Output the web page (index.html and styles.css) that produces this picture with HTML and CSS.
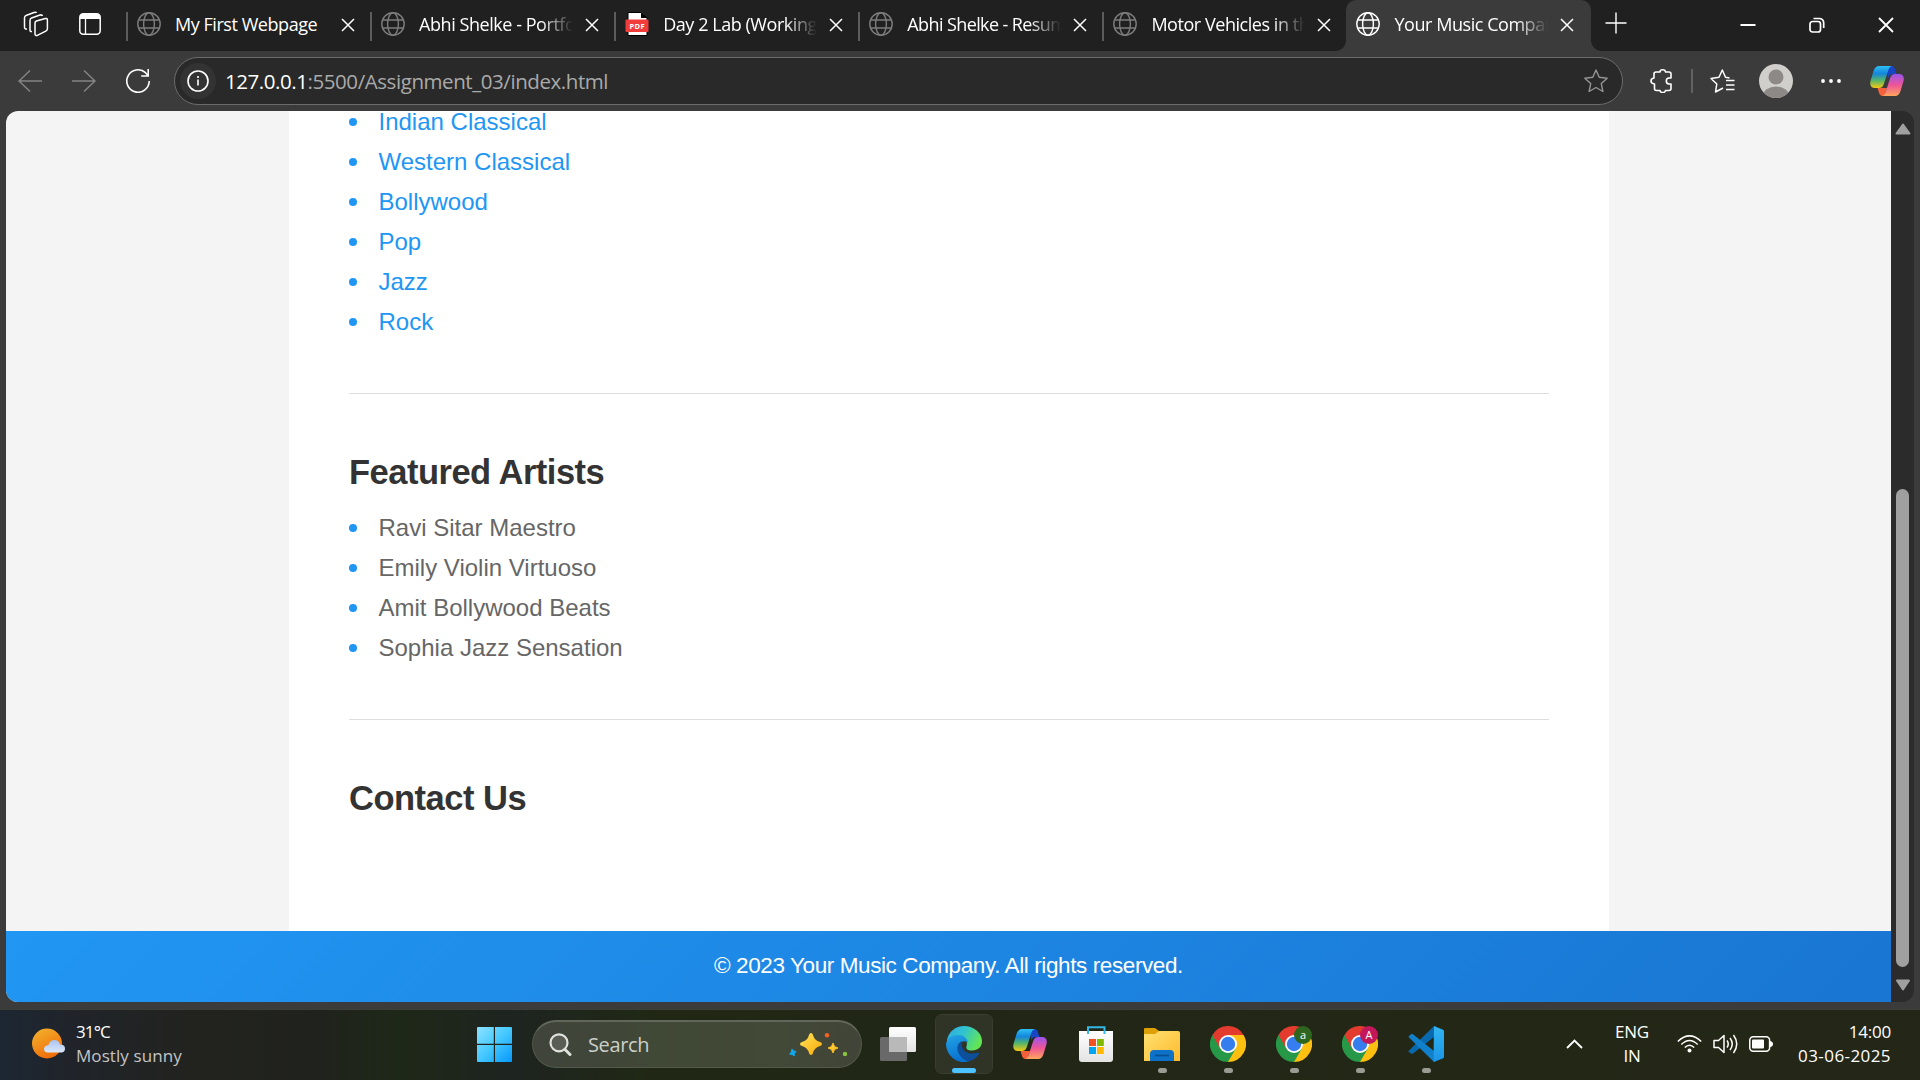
FILE: index.html
```html
<!DOCTYPE html>
<html lang="en">
<head>
<meta charset="utf-8">
<title>Your Music Company</title>
<link rel="stylesheet" href="styles.css">
</head>
<body>
<svg class="defs" width="0" height="0">
  <defs>
    <linearGradient id="copL" x1="0" y1="0" x2="0" y2="1"><stop offset="0" stop-color="#2dc0f5"/><stop offset=".35" stop-color="#1485dc"/><stop offset=".65" stop-color="#55b56a"/><stop offset="1" stop-color="#f6c912"/></linearGradient>
    <linearGradient id="copR" x1="0" y1="0" x2="0" y2="1"><stop offset="0" stop-color="#9a54ee"/><stop offset=".5" stop-color="#ee5597"/><stop offset="1" stop-color="#ffa65c"/></linearGradient>
    <linearGradient id="win" x1="0" y1="0" x2="1" y2="1"><stop offset="0" stop-color="#8ce2ff"/><stop offset=".5" stop-color="#45c8ff"/><stop offset="1" stop-color="#0698fb"/></linearGradient>
    <linearGradient id="sun" x1="0" y1="0" x2=".5" y2="1"><stop offset="0" stop-color="#f3b52f"/><stop offset="1" stop-color="#f06f0b"/></linearGradient>
    <linearGradient id="cloud" x1="0" y1="0" x2="0" y2="1"><stop offset="0" stop-color="#a9c3f1"/><stop offset="1" stop-color="#dce8fc"/></linearGradient>
    <linearGradient id="edgeTop" x1="0" y1="0" x2="1" y2=".4"><stop offset="0" stop-color="#32a9e6"/><stop offset=".5" stop-color="#2fc4cf"/><stop offset="1" stop-color="#62e457"/></linearGradient>
    <linearGradient id="edgeL" x1="0" y1="0" x2=".3" y2="1"><stop offset="0" stop-color="#24a4e4"/><stop offset="1" stop-color="#0872d2"/></linearGradient>
    <linearGradient id="folder" x1="0" y1="0" x2="1" y2="1"><stop offset="0" stop-color="#ffe071"/><stop offset="1" stop-color="#fdbb2e"/></linearGradient>
    <linearGradient id="vs" x1="0" y1="0" x2="0" y2="1"><stop offset="0" stop-color="#32b5f1"/><stop offset="1" stop-color="#1c94e6"/></linearGradient>
    <linearGradient id="star" x1="0" y1="0" x2="1" y2="1"><stop offset="0" stop-color="#ffe45a"/><stop offset="1" stop-color="#f9a908"/></linearGradient>
    <linearGradient id="white" x1="0" y1="0" x2="0" y2="1"><stop offset="0" stop-color="#fff"/><stop offset="1" stop-color="#e3e3e3"/></linearGradient>
  </defs>
  <symbol id="globe" viewBox="0 0 24 24"><g fill="none" stroke="currentColor" stroke-width="1.4"><circle cx="12" cy="12" r="11.2"/><ellipse cx="12" cy="12" rx="5.4" ry="11.2"/><path d="M1.8 8h20.4M1.8 16h20.4"/></g></symbol>
  <symbol id="close" viewBox="0 0 14 14"><path d="M1 1l12 12M13 1L1 13" stroke="#fff" stroke-width="1.5"/></symbol>
  <symbol id="copilot" viewBox="0 0 34 32">
    <path d="M17 1h4.500c2 0 3 1.500 3.600 3.500L26.500 9H23c-3 0-4 1.500-4.800 4z" fill="#1745c4"/>
    <path d="M7.500 23H17l-2.500 7.500c-.3.500-1.500.5-2 .5-2 0-3-1.500-3.600-3.500z" fill="#f4603a"/>
    <path d="M9.500 1H22c-2 .5-3 2-3.800 4.500L14 18.500c-1 3-2.200 4.500-5.200 4.500H5c-4 0-5.500-3-4.500-7L3.500 6C4.500 3 6 1 9.500 1z" fill="url(#copL)"/>
    <path d="M24.500 31H12c2-.5 3-2 3.800-4.500L20 13.500C21 10.500 22.200 9 25.200 9H29c4 0 5.500 3 4.500 7l-3 10c-1 3-2.500 5-6 5z" fill="url(#copR)"/>
  </symbol>
  <symbol id="chrome" viewBox="0 0 36 36">
    <path d="M18 18L33.600 9A18 18 0 0 1 18 36l-2-8z" fill="#fdc010"/>
    <path d="M2.400 9A18 18 0 0 0 18 36l7.800-13.500L18 18z" fill="#279847"/>
    <path d="M18 9h15.600l-8 14.500L18 18z" fill="#fdc010"/>
    <path d="M2.400 9A18 18 0 0 1 33.600 9H18l-7.500 14z" fill="#e33b2e"/>
    <circle cx="18" cy="18" r="9" fill="#fff"/><circle cx="18" cy="18" r="7.200" fill="#367df0"/>
  </symbol>
</svg>

<div class="browser">
  <header class="tabstrip">
    <div class="strip-tools">
      <svg width="26" height="26" viewBox="0 0 26 26" fill="none" stroke="#fff" stroke-width="1.500" stroke-linejoin="round"><path d="M12 12q0-1.500 1.400-2l9-2.500q2-.4 2 1.600v8.500q0 1.800-1.600 2.600l-8 4q-2.800 1-2.800-1.500z"/><path d="M9 20.500q-2 .5-2-1.500V9.500q0-2 1.500-2.500L17 4q2-.5 2.500 1"/><path d="M4 18q-2.500.500-2.500-2V7q0-2 1.500-2.500L11 1.500q2-.5 2.500.5"/></svg>
      <svg width="22" height="22" viewBox="0 0 22 22"><rect x=".8" y=".8" width="20.400" height="20.400" rx="3.500" fill="none" stroke="#fff" stroke-width="1.500"/><path d="M1 6V4q0-3 3-3h14q3 0 3 3v2z" fill="#fff"/><path d="M6.500 6v15" stroke="#fff" stroke-width="1.300"/></svg>
    </div>
    <div class="tab"><svg class="favicon"><use href="#globe"/></svg><span class="title">My First Webpage</span><svg class="x"><use href="#close"/></svg></div>
    <div class="tab"><svg class="favicon"><use href="#globe"/></svg><span class="title faded">Abhi Shelke - Portfo</span><svg class="x"><use href="#close"/></svg></div>
    <div class="tab"><svg class="favicon" viewBox="0 0 24 24"><path d="M3 .5h13l6 5.500v17.500H3z" fill="#fff" stroke="#000"/><path d="M16 .5V6h6z" fill="#000"/><rect x=".5" y="7.500" width="23" height="12.500" rx="1" fill="#f23c3c"/><text x="12.200" y="16.600" text-anchor="middle" class="pdf">PDF</text></svg><span class="title faded">Day 2 Lab (Working</span><svg class="x"><use href="#close"/></svg></div>
    <div class="tab"><svg class="favicon"><use href="#globe"/></svg><span class="title faded tight">Abhi Shelke - Resum</span><svg class="x"><use href="#close"/></svg></div>
    <div class="tab"><svg class="favicon"><use href="#globe"/></svg><span class="title faded">Motor Vehicles in th</span><svg class="x"><use href="#close"/></svg></div>
    <div class="tab active"><svg class="favicon"><use href="#globe"/></svg><span class="title faded">Your Music Compan</span><svg class="x"><use href="#close"/></svg></div>
    <svg class="newtab" width="22" height="22" viewBox="0 0 22 22"><path d="M11 .5v21M.5 11h21" stroke="#fff" stroke-width="1.400"/></svg>
    <div class="winbtns">
      <svg width="16" height="16" viewBox="0 0 16 16"><path d="M.5 8h15" stroke="#fff" stroke-width="2"/></svg>
      <svg width="16" height="16" viewBox="0 0 16 16" fill="none" stroke="#fff" stroke-width="1.700"><rect x="1" y="4.500" width="10.500" height="10.500" rx="2.500"/><path d="M4.500 1.500H10q4.700 0 4.700 4.700V11"/></svg>
      <svg width="16" height="16" viewBox="0 0 16 16"><path d="M1 1l14 14M15 1L1 15" stroke="#fff" stroke-width="1.800"/></svg>
    </div>
  </header>

  <nav class="toolbar">
    <div class="nav-icons">
      <svg width="24" height="24" viewBox="0 0 24 24" fill="none" stroke="#858585" stroke-width="1.400"><path d="M24 12H1M12 1.500L1 12l11 10.500"/></svg>
      <svg width="24" height="24" viewBox="0 0 24 24" fill="none" stroke="#858585" stroke-width="1.400"><path d="M0 12h23M12 1.500L23 12 12 22.500"/></svg>
      <svg width="24" height="24" viewBox="0 0 24 24" fill="none" stroke="#fff" stroke-width="1.600"><path d="M23.200 12A11.200 11.200 0 1 1 19.500 3.700L22 6.500M22.200 0v7h-7"/></svg>
    </div>
    <div class="address">
      <span class="info"><svg width="22" height="22" viewBox="0 0 22 22"><circle cx="11" cy="11" r="10" fill="none" stroke="#fff" stroke-width="1.600"/><path d="M11 9.500v6M11 6v2" stroke="#fff" stroke-width="1.600"/></svg></span>
      <span class="url"><b>127.0.0.1</b>:5500/Assignment_03/index.html</span>
      <svg width="24" height="24" viewBox="0 0 24 24" fill="none" stroke="#949494" stroke-width="1.400" stroke-linejoin="round"><path d="M12 1l3.200 7.300 8 .9-5.900 5.400 1.600 7.900L12 18.500l-6.900 4 1.600-7.900L.8 9.200l8-.9z"/></svg>
    </div>
    <svg class="puzzle" width="24" height="24" viewBox="0 0 24 24" fill="none" stroke="#fff" stroke-width="1.600" stroke-linejoin="round"><path d="M6 3h4q0-2.200 2.700-2.200T15.500 3H19q2 0 2 2v4h-2q-2.700.2-2.700 2.900T19 15h2v4.500q0 2-2 2h-3.500q-.3 2-2.800 2T10 21.500H6.500q-2 0-2-2V15Q1 14.500 1 12t3-3V5q0-2 2-2z"/></svg>
    <span class="divider"></span>
    <svg class="favs" width="25" height="24" viewBox="0 0 25 24" fill="none" stroke="#fff" stroke-width="1.500" stroke-linejoin="round"><path d="M13 19l-7.500 4 1.300-8L1 9.500l8-1.200L12.300 1l3.200 7.300 4 .7M16 11.500h8.500M16 16h8.500M16 20.500h8.500"/></svg>
    <svg class="avatar" width="34" height="34" viewBox="0 0 34 34"><clipPath id="av"><circle cx="17" cy="17" r="17"/></clipPath><g clip-path="url(#av)"><rect width="34" height="34" fill="#d0cfcc"/><circle cx="17" cy="13" r="7.500" fill="#8c8986"/><ellipse cx="17" cy="32" rx="13" ry="9.500" fill="#8c8986"/></g></svg>
    <svg class="dots" width="20" height="4" viewBox="0 0 20 4" fill="#fff"><circle cx="2" cy="2" r="1.900"/><circle cx="10" cy="2" r="1.900"/><circle cx="18" cy="2" r="1.900"/></svg>
    <svg width="34" height="32"><use href="#copilot"/></svg>
  </nav>

  <div class="viewport">
    <div class="page">
      <main class="container">
        <section>
          <ul class="genres"><li><a>Indian Classical</a></li><li><a>Western Classical</a></li><li><a>Bollywood</a></li><li><a>Pop</a></li><li><a>Jazz</a></li><li><a>Rock</a></li></ul>
        </section>
        <section>
          <h2>Featured Artists</h2>
          <ul><li>Ravi Sitar Maestro</li><li>Emily Violin Virtuoso</li><li>Amit Bollywood Beats</li><li>Sophia Jazz Sensation</li></ul>
        </section>
        <section><h2>Contact Us</h2></section>
      </main>
      <footer><span>© 2023 Your Music Company. All rights reserved.</span></footer>
    </div>
    <div class="scrollbar">
      <svg width="16" height="12" viewBox="0 0 16 12"><path d="M8 1.500L14.500 10.500h-13z" fill="#a0a0a0" stroke="#a0a0a0" stroke-width="2" stroke-linejoin="round"/></svg>
      <span class="thumb"></span>
      <svg width="16" height="12" viewBox="0 0 16 12"><path d="M8 10.500L14 1.500H2z" fill="#a0a0a0" stroke="#a0a0a0" stroke-width="2" stroke-linejoin="round"/></svg>
    </div>
  </div>
</div>

<div class="taskbar">
  <div class="weather">
    <svg width="34" height="32" viewBox="0 0 34 32"><circle cx="15" cy="15.500" r="15" fill="url(#sun)"/><path d="M16 24.500q-4 0-4-3.500t4.500-4q1.500-5 6-5t5.500 4.500q5 0 5 4t-4 4z" fill="url(#cloud)"/></svg>
    <div><div class="temp">31°C</div><div class="sky">Mostly sunny</div></div>
  </div>
  <div class="start"><svg width="35" height="35" viewBox="0 0 35 35" fill="url(#win)"><path d="M1 0h15.800v16.800H0V1q0-1 1-1zM18 0h16q1 0 1 1v15.800H18zM0 18h16.800v17H1q-1 0-1-1zM18 18h17v16q0 1-1 1H18z"/></svg></div>
  <div class="search">
    <svg width="23" height="23" viewBox="0 0 23 23" fill="#fff2" stroke="#dfe2dd" stroke-linecap="round"><circle cx="10" cy="9.800" r="8.500" stroke-width="2.200"/><path d="M16 16.500l5 5" stroke-width="3"/></svg>
    <span class="placeholder">Search</span>
    <svg class="sparkles" width="60" height="24" viewBox="0 0 60 24"><path d="M23 0q1.500 0 2 2 1.500 5.500 7 7 2 .5 2 2t-2 2q-5.500 1.500-7 7-.5 2-2 2t-2-2q-1.500-5.500-7-7-2-.5-2-2t2-2q5.500-1.500 7-7 .5-2 2-2z" fill="url(#star)"/><path d="M45 10l1.500 3.500L50 15l-3.500 1.500L45 20l-1.500-3.500L40 15l3.500-1.500z" fill="url(#star)" stroke="#fdbd22"/><path d="M4 16l1.500 2 2.500.3-1.500 2-.3 2.700-2-1.500-2.500-.3 1.500-2z" fill="#11a8f0" stroke="#11a8f0"/><circle cx="39" cy="2.200" r="2.200" fill="#f16324"/><circle cx="57" cy="21" r="2.200" fill="#8bc63e"/></svg>
  </div>
  <div class="apps">
    <div class="app"><svg width="36" height="34" viewBox="0 0 36 34"><rect x="0" y="10" width="27" height="24" rx="1.500" fill="#69696a"/><rect x="9" y="0" width="27" height="25" rx="1.500" fill="url(#white)"/><path d="M9 10h18v15H9z" fill="#b9b9b9"/></svg></div>
    <div class="app current"><svg width="36" height="36" viewBox="0 0 36 36"><path d="M1 14C3 5 10 0 18 0c10 0 18 7 18 15 0 6-4 9.500-10 9.500-4 0-6.500-1.500-5.500-4C22 17 20 10 12 10 6 10 1 14 1 20z" fill="url(#edgeTop)"/><path d="M0 18C1 12 6 9 12 9c7 0 10 5 10 8-4-4-9 0-9 5 0 6 4 11 10 13.300A18 18 0 0 1 0 18z" fill="url(#edgeL)"/><path d="M16 15c-5 2-6 8-3 13 3 5 8 8 11 7 4-1 7-4 9-7 .6-1-.4-1.600-1.300-1.200C25 29 14 27 16 15z" fill="#0d4f9b"/></svg></div>
    <div class="app"><svg width="34" height="32"><use href="#copilot"/></svg></div>
    <div class="app"><svg width="34" height="36" viewBox="0 0 34 36"><path d="M0 5h34v28q0 3-3 3H3q-3 0-3-3z" fill="url(#white)"/><path d="M9 8V1.200h16.500V8" fill="none" stroke="#30b8e8" stroke-width="2"/><path d="M10 13h7v7h-7z" fill="#f15025"/><path d="M18 13h6.800v7H18z" fill="#7fba00"/><path d="M10 21h7v7h-7z" fill="#00a4ef"/><path d="M18 21h6.800v7H18z" fill="#ffb900"/></svg></div>
    <div class="app open"><svg width="36" height="34" viewBox="0 0 36 34"><path d="M0 2q0-1 1-1h10l4 3v4H0z" fill="#dda105"/><path d="M0 7h11l4-3h19q2 0 2 2v28H0z" fill="url(#folder)"/><path d="M6 34V27q0-4 4-4h16q4 0 4 4v7z" fill="#0d72c7"/><path d="M11 28.500h14" stroke="#064f91" stroke-width="1.700"/></svg></div>
    <div class="app open"><svg width="36" height="36"><use href="#chrome"/></svg></div>
    <div class="app open"><svg width="36" height="36"><use href="#chrome"/></svg><span class="badge green">a</span></div>
    <div class="app open"><svg width="36" height="36"><use href="#chrome"/></svg><span class="badge pink">A</span></div>
    <div class="app open"><svg width="36" height="36" viewBox="0 0 36 36"><path d="M1 24.500L26 0v11L5 27.500q-1 .6-2 0L.8 26q-1-.8.2-1.500z" fill="#0969ae"/><path d="M1 11.500q-1-.8 0-1.500l2-1.800q1-.7 2 0L26 25v11z" fill="#1180cb"/><path d="M26 0l9 3.800q1 .5 1 1.500v25.400q0 1-1 1.500L26 36l-.5-.5z" fill="url(#vs)"/></svg></div>
  </div>
  <div class="tray">
    <svg class="chev" width="17" height="10" viewBox="0 0 17 10"><path d="M1 9l7.500-7.500L16 9" fill="none" stroke="#fff" stroke-width="1.900"/></svg>
    <div class="lang">ENG<br>IN</div>
    <svg class="wifi" width="25" height="18" viewBox="0 0 25 18" fill="none" stroke="#fff" stroke-width="1.500"><path d="M.8 6.500q11.700-11.300 23.400 0M4.300 9.500q8.200-8 16.400 0M7.800 12.500q4.700-4.500 9.400 0"/><circle cx="12.500" cy="15.500" r="2" fill="#fff" stroke="none"/></svg>
    <svg class="vol" width="25" height="20" viewBox="0 0 25 20" fill="none" stroke="#fff" stroke-width="1.500" stroke-linejoin="round"><path d="M1 6.500h4.500L11 1.500v17l-5.500-5H1zM14 6.500q2.500 3.500 0 7M17 4q4.500 6 0 12M20.500 1q6.500 9 0 18"/></svg>
    <svg width="24" height="16" viewBox="0 0 24 16"><rect x=".8" y=".8" width="19.800" height="14.400" rx="3.500" fill="none" stroke="#fff" stroke-width="1.500"/><rect x="3" y="3.500" width="12" height="9" rx="1" fill="#fff"/><path d="M21 5q3 .5 3 3t-3 3z" fill="#fff"/></svg>
    <div class="clock">14:00<br><span class="date">03-06-2025</span></div>
  </div>
</div>
</body>
</html>
```
FILE: styles.css
```css
* { box-sizing: border-box; }
body {
  margin: 0;
  width: 1920px;
  height: 1080px;
  overflow: hidden;
  background: #3b3b3b;
  font-family: "Open Sans", "Noto Sans", sans-serif;
  color: #fff;
}
svg { display: block; flex: none; }
.defs { position: absolute; }
.browser { height: 1009px; display: flex; flex-direction: column; }

/* Tab strip */
.tabstrip { height: 51px; flex: none; display: flex; align-items: flex-start; background: #202020; }
.strip-tools { width: 126px; height: 48px; padding-left: 23px; display: flex; align-items: center; gap: 30px; }
.tab { position: relative; width: 244.1px; height: 51px; padding: 0 0 3px 11px; display: flex; align-items: center; flex: none; }
.tab::before { content: ""; position: absolute; left: 0; top: 12px; width: 2px; height: 29px; background: #5c5c5c; }
.favicon { width: 24px; height: 24px; color: #7c7c7c; }
.title { width: 154px; margin-left: 14px; font-size: 18px; letter-spacing: -0.450px; line-height: 26px; white-space: nowrap; }
.tight { letter-spacing: -0.600px; }
.faded { mask-image: linear-gradient(90deg, #000 122px, transparent 154px); }
.x { width: 14px; height: 14px; margin: 2px 0 0 12px; }
.active { background: #3b3b3b; border-radius: 10px 10px 0 0; padding-left: 10px; }
.active::before { left: -10px; top: auto; bottom: 0; width: 10px; height: 10px; background: radial-gradient(circle at 0 0, transparent 9.500px, #3b3b3b 10px); }
.active::after { content: ""; position: absolute; right: -10px; bottom: 0; width: 10px; height: 10px; background: radial-gradient(circle at 100% 0, transparent 9.500px, #3b3b3b 10px); }
.active .favicon { color: #fff; }
.pdf { font: bold 7.500px "Open Sans", sans-serif; fill: #fff; letter-spacing: .4px; }
.newtab { margin: 12px 0 0 14px; }
.winbtns { margin: 17px 26px 0 auto; display: flex; gap: 53px; }

/* Toolbar */
.toolbar { height: 60px; flex: none; display: flex; align-items: center; padding: 0 16px 0 18px; background: #3b3b3b; }
.nav-icons { width: 156px; display: flex; gap: 30px; }
.address { width: 1450px; height: 48px; border: 1.500px solid #6b6b6b; border-radius: 24px; background: #292929; display: flex; align-items: center; padding: 0 14px 0 5px; }
.info { width: 36px; height: 36px; border-radius: 50%; background: #333; display: grid; place-items: center; }
.url { flex: 1; margin-left: 9px; font-size: 20.500px; letter-spacing: -0.430px; color: #aaa; }
.url b { font-weight: 400; color: #fff; }
.puzzle { margin-left: 27px; }
.divider { width: 2px; height: 24px; margin: 0 17px; background: #626262; }
.avatar { margin-left: 24px; }
.dots { margin: 0 29px 0 28px; }

/* Web page */
.viewport { margin: 0 6px; height: 891px; display: flex; border-radius: 12px; overflow: hidden; background: #2b2b2b; }
.page { width: 1885px; height: 891px; display: flex; flex-direction: column; background: #f4f4f4; font-family: "Liberation Sans", Arial, sans-serif; }
.container { width: 1320px; height: 820px; margin-left: 283px; padding: 0 60px; overflow: hidden; background: #fff; }
section { border-bottom: 1px solid #ddd; padding: 56px 0 51px; }
section:first-child { padding-top: 0; }
section:last-child { border: 0; }
h2 { margin: 0 0 13px; font-size: 34.500px; line-height: 45px; letter-spacing: -0.500px; color: #333; }
ul { list-style: none; margin: 0; padding: 0; }
.genres { margin-top: -9px; color: #2196f3; }
li { display: flex; align-items: center; height: 40px; font-size: 24px; line-height: 40px; color: #666; }
li a { color: #2196f3; }
li::before { content: ""; width: 8px; height: 8px; margin: -1px 21.500px 0 0; border-radius: 50%; background: #2196f3; }
footer { height: 71px; padding-bottom: 2px; display: grid; place-items: center; background: linear-gradient(135deg, #2196f3, #1976d2); font-size: 22.500px; letter-spacing: -0.400px; }
.scrollbar { width: 23px; display: flex; flex-direction: column; align-items: center; padding-top: 12px; }
.thumb { width: 13px; height: 478px; margin: 354px 0 12px; border-radius: 7px; background: #a0a0a0; }

/* Taskbar */
.taskbar { height: 71px; display: flex; align-items: center; padding-bottom: 2px; border-top: 1px solid #3c4035; background: linear-gradient(90deg, #1c2733 0, #20242b 60px, #22231f 190px, #20221d 310px, #1e2818 400px, #1e2420 510px, #202815 650px, #212616 1000px, #232716 1400px, #242717 1920px); }
.weather { width: 477px; padding-left: 32px; display: flex; align-items: center; gap: 10px; }
.temp, .sky { font-size: 17px; line-height: 24px; white-space: nowrap; }
.temp { letter-spacing: -0.900px; }
.sky { letter-spacing: 0.080px; color: #c4c5c4; }
.start { width: 55px; }
.search { width: 330px; height: 48px; display: flex; align-items: center; padding: 0 13px 0 16px; border: 1px solid #535a49; border-top: 2px solid #62675c; border-radius: 24px; background: linear-gradient(90deg, #40443c, #404935 45%, #424937 75%, #414438); }
.placeholder { flex: 1; margin-left: 16px; font-size: 20px; letter-spacing: -0.350px; color: #cdd0c9; }
.apps { margin-left: 3px; display: flex; }
.app { position: relative; width: 66px; height: 60px; display: grid; place-items: center; }
.app svg { position: relative; }
.current::before { content: ""; position: absolute; inset: 0 4px; border: 1px solid #3a3e31; border-radius: 7px; background: #2f3427; }
.current::after, .open::after { content: ""; position: absolute; bottom: 1px; left: 50%; width: 9px; height: 5px; margin-left: -4px; border-radius: 3px; background: #9a9c94; }
.current::after { width: 24px; margin-left: -12px; background: #4cc2ff; }
.badge { position: absolute; left: 33px; top: 12px; width: 18px; height: 18px; border-radius: 50%; display: grid; place-items: center; font-size: 11px; line-height: 18px; }
.green { background: #2e661f; }
.pink { background: #c2185b; }
.tray { flex: 1; display: flex; align-items: center; justify-content: flex-end; padding-right: 29px; font-size: 17px; line-height: 24px; }
.chev { margin-right: 30px; }
.lang { width: 38px; margin-right: 26px; text-align: center; letter-spacing: -0.200px; }
.wifi { margin-right: 11px; }
.vol { margin-right: 11px; }
.clock { width: 100px; margin-left: 18px; text-align: right; letter-spacing: -0.200px; white-space: nowrap; }
.date { letter-spacing: 0.420px; }
```
